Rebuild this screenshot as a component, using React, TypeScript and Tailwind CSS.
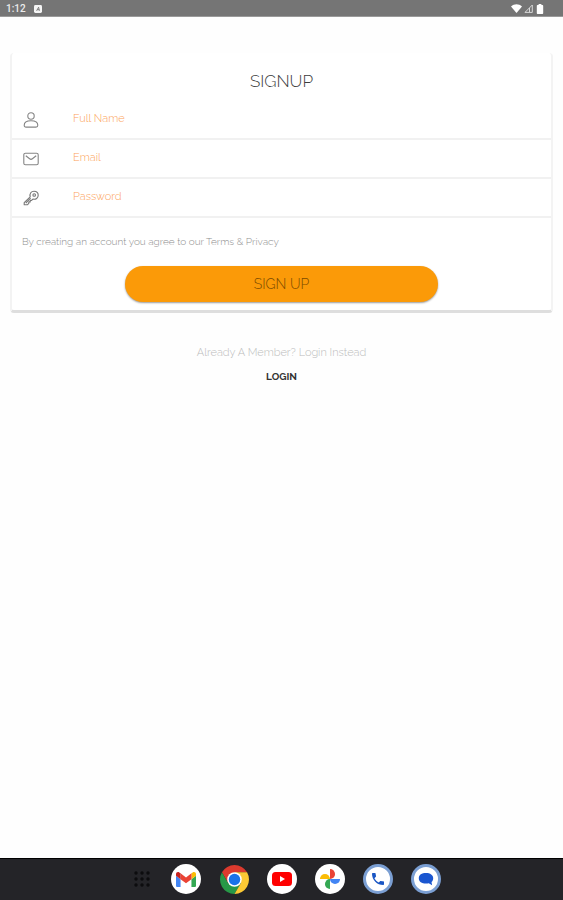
import type { ReactNode } from 'react'

function UserIcon() {
  return (
    <svg viewBox="0 0 16 16" className="h-4 w-4" fill="none" stroke="#858585" strokeWidth="1.1">
      <circle cx="8" cy="4" r="3.2" />
      <path d="M1.2 13.2c0-2.6 2.6-4.5 6.8-4.5s6.8 1.9 6.8 4.5c0 1.2-.7 1.9-1.8 1.9H3c-1.1 0-1.8-.7-1.8-1.9Z" />
    </svg>
  )
}

function MailIcon() {
  return (
    <svg viewBox="0 0 16 16" className="h-4 w-4" fill="none" stroke="#858585" strokeWidth="1.1">
      <rect x="0.8" y="2.2" width="14.4" height="11.6" rx="1.6" />
      <path d="M2.8 4.8 6.6 7.8c.9.7 1.9.7 2.8 0l3.8-3" />
    </svg>
  )
}

function KeyIcon() {
  return (
    <svg viewBox="0 0 16 16" className="h-4 w-4" fill="none" stroke="#787878" strokeWidth="1.1" strokeLinejoin="round">
      <path d="M7.2 6.8C6.4 3.6 8.2 1.2 11 1.2c2.5 0 4.2 1.7 4.2 4.1 0 2.7-2.3 4.5-5.3 3.8L8.6 10.4H7.2v1.5H5.8v1.4L4.3 14.8H1.2v-2.2Z" />
      <circle cx="11.2" cy="5" r="1.3" />
      <path d="m2.8 13 4.8-4.8" />
    </svg>
  )
}

type FieldProps = {
  id: string
  label: string
  type: string
  icon: ReactNode
}

function Field({ id, label, type, icon }: FieldProps) {
  return (
    <div className="flex h-[39px] items-center border-b-2 border-[#f1f1f1] pl-[11px]">
      <label htmlFor={id} aria-label={label} className="w-[50px] shrink-0">
        {icon}
      </label>
      <input
        id={id}
        type={type}
        placeholder={label}
        className="min-w-0 flex-1 bg-transparent text-[11px] font-light text-[#fb9a45] outline-none placeholder:text-[#fca35a]"
      />
    </div>
  )
}

function StatusBar() {
  return (
    <header className="flex h-[17px] items-center justify-between border-b border-[#9a9a9a] bg-[#757575] pr-[18px] pl-1.5 pt-px font-['Roboto',sans-serif]">
      <div className="flex items-center gap-2">
        <span className="text-[10px] leading-4 font-medium text-[#ececec]">1:12</span>
        <svg viewBox="0 0 8 8" className="h-2 w-2">
          <rect width="8" height="8" rx="1.4" fill="#f5f5f5" />
          <path d="M2.6 5.8 4.6 2.2 5.4 5.8M3.2 4.7h2" fill="none" stroke="#757575" strokeWidth="0.9" />
        </svg>
      </div>
      <div className="flex items-center gap-0.5">
        <svg viewBox="0 0 11 9" className="h-[9px] w-[11px]">
          <path d="M0 2.4C3.2-.6 7.800-.6 11 2.4L5.5 9Z" fill="#fff" />
        </svg>
        <svg viewBox="0 0 9 9" className="h-[9px] w-[9px]" fill="none" stroke="#d8d8d8">
          <path d="M8.3 1v7.400H1Z" />
          <path d="M5.500 4v4" />
        </svg>
        <svg viewBox="0 0 10 10" className="h-2.5 w-2.5">
          <path d="M3.6 0h2.8v1h.8c.6 0 1 .4 1 1v7c0 .6-.4 1-1 1H2.8c-.6 0-1-.4-1-1V2c0-.6.4-1 1-1h.8Z" fill="#fff" />
        </svg>
      </div>
    </header>
  )
}

function AppButton({ name, className, children }: { name: string; className: string; children: ReactNode }) {
  return (
    <button
      type="button"
      aria-label={name}
      className={`flex h-[30px] w-[30px] items-center justify-center rounded-full ${className}`}
    >
      {children}
    </button>
  )
}

function Dock() {
  return (
    <nav className="flex h-[42px] items-center justify-center gap-[18px] border-t border-black bg-[#242428] pb-px pl-3">
      <button type="button" aria-label="All apps" className="mr-[3px]">
        <svg viewBox="0 0 16 16" className="h-4 w-4" fill="#0c0c0e">
          {[2, 8, 14].map((y) => [2, 8, 14].map((x) => <circle key={`${x}-${y}`} cx={x} cy={y} r="1.7" />))}
        </svg>
      </button>
      <AppButton name="Gmail" className="bg-white">
        <svg viewBox="52 42 88 66" className="h-[15px] w-5">
          <path fill="#4285f4" d="M58 108h14V74L52 59v43c0 3.32 2.69 6 6 6" />
          <path fill="#34a853" d="M120 108h14c3.32 0 6-2.69 6-6V59l-20 15" />
          <path fill="#fbbc04" d="M120 48v26l20-15v-8c0-7.42-8.47-11.65-14.4-7.2" />
          <path fill="#ea4335" d="M72 74V48l24 18 24-18v26L96 92" />
          <path fill="#c5221f" d="M52 51v8l20 15V48l-5.6-4.2c-5.94-4.45-14.4-.22-14.4 7.2" />
        </svg>
      </AppButton>
      <AppButton name="Chrome" className="bg-transparent">
        <svg viewBox="0 0 48 48" className="h-[29px] w-[29px]">
          <path fill="#dc3a2e" d="M3.22 12A24 24 0 0 1 44.78 12H24L13.61 30Z" />
          <path fill="#279847" d="M3.22 12 13.61 30H34.39L24 48A24 24 0 0 1 3.22 12Z" />
          <path fill="#fcc934" d="M44.78 12H24L34.39 30 24 48A24 24 0 0 0 44.78 12Z" />
          <circle cx="24" cy="24" r="12" fill="#fff" />
          <circle cx="24" cy="24" r="9.5" fill="#1a73e8" />
        </svg>
      </AppButton>
      <AppButton name="YouTube" className="bg-white">
        <svg viewBox="0 0 20 14" className="h-3.5 w-5">
          <rect width="20" height="14" rx="3.5" fill="#f00" />
          <path d="M8 4v6l5-3Z" fill="#fff" />
        </svg>
      </AppButton>
      <AppButton name="Photos" className="bg-white">
        <svg viewBox="0 0 24 24" className="h-[22px] w-[22px]">
          <path fill="#ea4335" d="M12 1a5.5 5.5 0 0 1 0 11Z" />
          <path fill="#4285f4" d="M23 12a5.5 5.5 0 0 1-11 0Z" />
          <path fill="#34a853" d="M12 23a5.5 5.5 0 0 1 0-11Z" />
          <path fill="#fbbc04" d="M1 12a5.5 5.5 0 0 1 11 0Z" />
        </svg>
      </AppButton>
      <AppButton name="Phone" className="border-[3px] border-[#7b9fd3] bg-white">
        <svg viewBox="0 0 24 24" className="h-4 w-4">
          <path
            fill="#1a56c4"
            d="M6.62 10.79c1.44 2.83 3.76 5.14 6.59 6.59l2.2-2.2c.27-.27.67-.36 1.02-.24 1.12.37 2.33.57 3.57.57.55 0 1 .45 1 1V20c0 .55-.45 1-1 1-9.39 0-17-7.61-17-17 0-.55.45-1 1-1h3.5c.55 0 1 .45 1 1 0 1.25.2 2.45.57 3.57.11.35.03.74-.25 1.02z"
          />
        </svg>
      </AppButton>
      <AppButton name="Messages" className="border-[3px] border-[#7b9fd3] bg-white">
        <svg viewBox="0 0 16 14" className="h-3.5 w-4">
          <path fill="#1a56d0" d="M8 1c4.2 0 7.2 2 7.2 5.2 0 1.9-.8 3-1.7 3.9l.6 3.1-3.3-1.9c-.9.2-1.8.2-2.8.2-4.2 0-7.2-2-7.2-5.3S3.8 1 8 1Z" />
        </svg>
      </AppButton>
    </nav>
  )
}

export default function App() {
  return (
    <div className="flex min-h-screen flex-col bg-[#fefefe] font-['Raleway','Lato',sans-serif]">
      <StatusBar />
      <main className="flex-1 px-2.5 pt-9">
        <form
          onSubmit={(e) => e.preventDefault()}
          className="rounded border-x-2 border-b-3 border-x-[#f3f3f3] border-b-[#dedede] bg-white pb-2"
        >
          <h1 className="pt-4 pb-2 text-center text-[17px] leading-6 font-light text-[#3c3c3c]">SIGNUP</h1>
          <Field id="name" label="Full Name" type="text" icon={<UserIcon />} />
          <Field id="email" label="Email" type="email" icon={<MailIcon />} />
          <Field id="password" label="Password" type="password" icon={<KeyIcon />} />
          <p className="px-2.5 py-4 text-[10px] leading-4 font-light text-[#8e8e8e]">
            By creating an account you agree to our Terms &amp; Privacy
          </p>
          <button
            type="submit"
            className="mx-auto block h-9 w-[58%] rounded-full bg-[#fb9a08] text-[14px] font-light text-[#7a4a00] shadow-[0_1px_2px_#00000066]"
          >
            SIGN UP
          </button>
        </form>
        <div className="flex flex-col items-center gap-2 pt-8 text-center">
          <p className="text-[11px] leading-4 font-light text-[#bcbcbc]">Already A Member? Login Instead</p>
          <a href="#login" className="text-[10px] leading-4 font-bold text-[#333]">
            LOGIN
          </a>
        </div>
      </main>
      <Dock />
    </div>
  )
}
